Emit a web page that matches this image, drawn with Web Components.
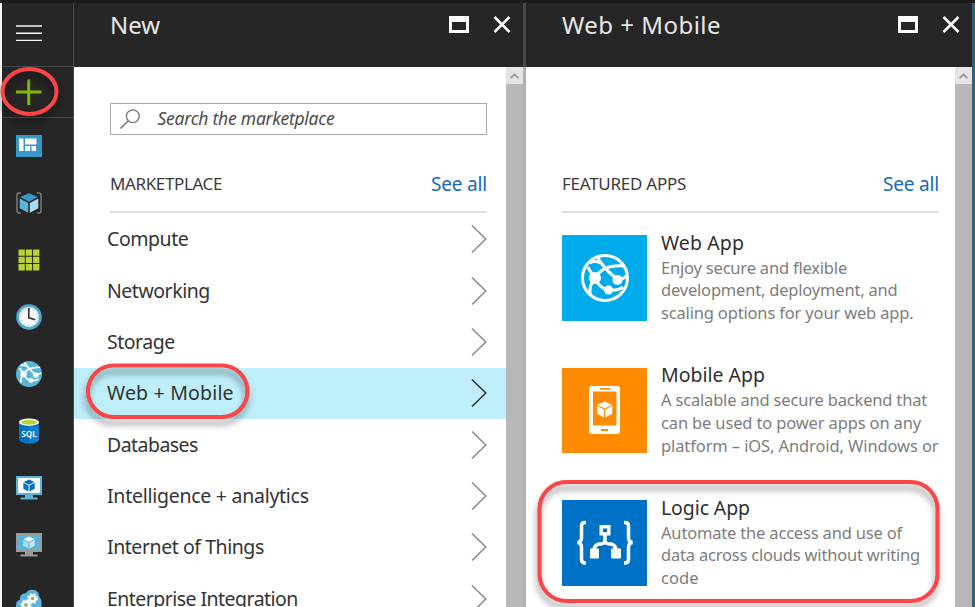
<!DOCTYPE html>
<html lang="en">
<head>
<meta charset="utf-8">
<title>New - Web + Mobile</title>
<style>
html,body{margin:0;width:975px;height:607px;overflow:hidden;background:#fff}
body{font-family:"Noto Sans","Open Sans",sans-serif;color:#333}
</style>
</head>
<body>
<portal-page></portal-page>
<script>
const define=(name,html,setup)=>customElements.define(name,class extends HTMLElement{
  connectedCallback(){
    if(this.shadowRoot)return;
    const t=document.createElement('template');
    t.innerHTML=html;
    this.attachShadow({mode:'open'}).append(t.content.cloneNode(true));
    if(setup)setup(this,this.shadowRoot);
  }
});

/* One line of text, tracked so that it takes the width given in "w". */
define('fit-text',`<style>
:host{display:block;white-space:nowrap;width:max-content}
span{display:inline-block}
</style><span></span>`,(el,root)=>{
  const s=root.querySelector('span');
  s.textContent=el.getAttribute('text');
  const w=parseFloat(el.getAttribute('w'));
  const natural=s.getBoundingClientRect().width;
  s.style.letterSpacing=((w-natural)/s.textContent.length)+'px';
});

const cube=(x,y,s,a,b,c)=>`<g transform="translate(${x} ${y}) scale(${s})"><path fill="${a}" d="M0-10 9-6 0-1.3-9-6Z"/><path fill="${b}" d="M-9.5-4.7-.8-.1V10l-8.7-4.6Z"/><path fill="${c}" d="M9.5-4.7.8-.1V10l8.7-4.6Z"/></g>`;
const globe=(disc,line,rim)=>`<circle cx="24" cy="24" r="22.5" fill="${disc}" stroke="${rim}" stroke-width="3"/>
<g fill="none" stroke="${line}" stroke-width="3.2"><path d="M16 2.500Q22 14 36 25M14 24Q22 10 44 12M9 9Q12 6 20 9M14 24Q8 16 7 13M14 24Q8 31 9 40M14 24Q18 34 27 36M27 36Q37 37 42 33M36 25Q41 26 46 22"/></g>
<g fill="${line}"><circle cx="14" cy="24" r="6"/><circle cx="36.500" cy="26" r="5"/><circle cx="27.500" cy="36" r="4.500"/></g>`;
const gear=(x,y,r)=>`<circle cx="${x}" cy="${y}" r="${r}" fill="#7fba42" stroke="#fff" stroke-width="2.600"/><circle cx="${x}" cy="${y}" r="${r+1.6}" fill="none" stroke="#e8f6fb" stroke-width="1.600" stroke-dasharray="2 1.700"/>`;

const ICONS={
menu:['0 0 26 26','<path d="M0 5h26M0 12.200h26M0 19.400h26" stroke="#f4f4f4" stroke-width="1.400"/>'],
plus:['0 0 26 26','<path d="M0 13h25.500M12.700.5v25.500" stroke="#7fb900" stroke-width="3" />'],
dash:['0 0 26 26','<path fill="#3999c6" d="M0 2h26v22H0z"/><path fill="#fff" d="M3 5.500h4.500v12.500H3zM9 5.500h11.500v6H9zM9 13h5v5H9zM15.500 13h4.500v5h-4.500z"/><path d="M14 14.500h2.500" stroke="#79bddd"/>'],
group:['0 0 26 26',`<path d="M5 3H3Q1 3 1 5v16q0 2 2 2h2M21 3h2q2 0 2 2v16q0 2-2 2h-2" fill="none" stroke="#7a7a7a" stroke-width="1.500"/>${cube(13,13,.98,'#3999c6','#59b4d9','#a9daee')}`],
grid:['0 0 26 26','<g fill="#b8d432"><path d="M2.500 2.500h6.300v6.300H2.500zM9.800 2.500h6.300v6.300H9.800zM17.100 2.500h6.300v6.300h-6.300zM2.500 9.800h6.300v6.300H2.500zM9.800 9.800h6.300v6.300H9.800zM17.100 9.800h6.300v6.300h-6.300zM2.500 17.100h6.300v6.300H2.500zM9.800 17.100h6.300v6.300H9.800zM17.100 17.100h6.300v6.300h-6.300z"/></g>'],
clock:['0 0 26 26','<circle cx="13" cy="13" r="11.400" fill="#fff" stroke="#4faad3" stroke-width="2.800"/><circle cx="13" cy="13" r="8.700" fill="none" stroke="#999" stroke-width="1.300" stroke-dasharray=".9 3.655"/><path d="M12.800 4v9.800l6.500 2" fill="none" stroke="#333" stroke-width="1.700"/>'],
web:['0 0 48 48',globe('#59b4d9','#fff','#59b4d9')],
sql:['0 0 26 26','<path fill="#0072c6" d="M3 4.500v17c0 2 4.500 4 10 4s10-2 10-4v-17z"/><path fill="#2d8fd3" d="M13 8.500h10v13c0 2-4.500 4-10 4z" opacity=".45"/><ellipse cx="13" cy="4.200" rx="10" ry="3.700" fill="#fff"/><ellipse cx="13" cy="4.200" rx="7.800" ry="2.500" fill="#b8d432"/><text x="13" y="18.700" text-anchor="middle" font-family="Noto Sans,sans-serif" font-size="8.300" font-weight="600" fill="#fff">SQL</text>'],
vm:['0 0 26 26',`<path fill="#59b4d9" d="M0 1h26v19h-9v2.500h4.500V24.500H4.500v-2h4.500V20H0z"/><path fill="#fff" d="M2 3h22v15H2z"/>${cube(13,10.500,.6,'#0072c6','#0072c6','#0072c6')}`],
vmc:['0 0 26 26',`<path fill="#999" d="M0 1h26v19h-9v2.500h4.500V24.500H4.500v-2h4.500V20H0z"/><path fill="#59b4d9" d="M2 3h22v15H2z"/>${cube(13,10.500,.6,'#fff','#a9daee','#c5e7f4')}`],
cloud:['0 0 26 26',`<path fill="#59b4d9" d="M6 24Q0 23 0 17T4 11Q3 5 10 4Q13 0 18 1T23 7Q27 12 25 19T18 24Z"/>${gear(16.500,9.500,3)}${gear(10,16,3.200)}`],
search:['0 0 20 20','<circle cx="12.800" cy="7.200" r="6.400" fill="none" stroke="#777" stroke-width="1.300"/><path d="M8.200 11.800.5 19.500" stroke="#777" stroke-width="1.600"/>'],
max:['0 0 20 17','<path fill="#fff" fill-rule="evenodd" d="M0 0h20v17H0zM3 6h14v8H3z"/>'],
close:['0 0 18 17','<path d="M1.500 1 16.500 16M16.500 1 1.500 16" stroke="#fff" stroke-width="2.500"/>'],
chevron:['0 0 16 30','<path d="M1 1.500 14.800 15 1 28.500" fill="none" stroke="currentColor" stroke-width="1.500"/>'],
webTile:['0 0 48 48',globe('none','#fff','#fff')],
mobileTile:['0 0 32 48',`<path fill="#fff" fill-rule="evenodd" d="M3 0h25q3 0 3 3v42q0 3-3 3H3q-3 0-3-3V3Q0 0 3 0M4 5.500v34h23.500v-34zM11 2v1.800h10V2zM12 43v2h7v-2z"/>${cube(15.700,23.500,.8,'#fff','#fff','#fff')}`],
logicTile:['0 0 56 44','<g fill="none" stroke="#fff" stroke-width="3.500"><path d="M9 1.500H8Q4.500 1.500 4.500 5v12q0 4-4 4.500q4 .5 4 4.500v12q0 4 3.500 4h1M47 1.500h1q3.500 0 3.500 3.500v12q0 4 4 4.500q-4 .5-4 4.500v12q0 4-3.500 4h-1"/><path d="M28 13v7Q28 23 22 23Q17 24 17 30M28 20Q28 23 34 23Q39 24 39 30"/></g><path fill="#fff" fill-rule="evenodd" d="M22.500 4h11v10.500h-11zM26 7.500v3.500h4V7.500z"/><path fill="#fff" d="M14 27.500h7q1 0 1 1v8q0 1-1 1h-7q-1 0-1-1v-8q0-1 1-1M35 27.500h8q1 0 1 1v8q0 1-1 1h-8q-1 0-1-1v-8q0-1 1-1"/>']
};
define('ui-icon',`<style>:host{display:block;flex:none}svg{display:block;width:100%;height:100%;overflow:visible}</style>`,(el,root)=>{
  const [vb,body]=ICONS[el.getAttribute('name')];
  root.innerHTML+=`<svg viewBox="${vb}">${body}</svg>`;
});

define('nav-rail',`<style>
:host{display:flex;flex-direction:column;width:71px;border-right:1px solid #4a4a4a;background:#262626;flex:none;height:604px;overflow:hidden}
div{height:57px;flex:none;display:flex;align-items:center;padding:0 0 1px 13.500px;box-sizing:border-box}
div.m{height:64px;border-bottom:1px solid #4a4a4a}
div.p{height:51px;border-bottom:1px solid #4a4a4a}
ui-icon{width:26px;height:26px}
</style>
<div class="m"><ui-icon name="menu"></ui-icon></div>
<div class="p"><ui-icon name="plus"></ui-icon></div>
<div><ui-icon name="dash"></ui-icon></div><div><ui-icon name="group"></ui-icon></div><div><ui-icon name="grid"></ui-icon></div><div><ui-icon name="clock"></ui-icon></div><div><ui-icon name="web"></ui-icon></div><div><ui-icon name="sql"></ui-icon></div><div><ui-icon name="vm"></ui-icon></div><div><ui-icon name="vmc"></ui-icon></div><div><ui-icon name="cloud"></ui-icon></div>`);

define('scroll-track',`<style>
:host{display:block;width:17px;background:#b8b8b8;flex:none}
div{height:17px;background:#e4e4e4;display:flex;align-items:center;justify-content:center}
svg{width:9px;height:6px}
</style><div><svg viewBox="0 0 9 6"><path d="M.5 5 4.500 1.500 8.500 5" fill="none" stroke="#999" stroke-width="1.800"/></svg></div>`);

define('portal-blade',`<style>
:host{display:flex;flex-direction:column;height:604px;flex:none;overflow:hidden;background:#fff}
header{height:64px;flex:none;background:#262626;color:#e6e6e6;display:flex;align-items:flex-start;padding:0 var(--hr) 0 36px;box-sizing:border-box}
header fit-text{font-size:24px;line-height:43px;font-weight:400;margin-right:auto}
.max{width:20px;height:17px;margin-top:13px}.x{width:18px;height:17px;margin:13px 0 0 24px}
section{display:flex;flex:1;min-height:0}
main{flex:1;min-width:0;overflow:hidden}
</style>
<header><fit-text></fit-text><ui-icon class="max" name="max"></ui-icon><ui-icon class="x" name="close"></ui-icon></header>
<section><main><slot></slot></main><scroll-track></scroll-track></section>`,(el,root)=>{
  const old=root.querySelector('fit-text'),t=document.createElement('fit-text');
  t.setAttribute('text',el.getAttribute('heading'));t.setAttribute('w',el.getAttribute('w'));
  old.replaceWith(t);
});

define('section-head',`<style>
:host{display:flex;justify-content:space-between;margin:0 19px 0 36px;height:41px;border-bottom:2px solid #dcdfe2;line-height:24px;box-sizing:border-box}
.t{font-size:17px;color:#3a3a3a}.a{font-size:19px;color:#1569bd}
</style><slot></slot>`,(el,root)=>{
  root.innerHTML=root.innerHTML.replace('<slot></slot>',`<fit-text class="t" text="${el.getAttribute('label')}" w="${el.getAttribute('w')}"></fit-text><fit-text class="a" text="See all" w="56"></fit-text>`);
});

define('search-box',`<style>
:host{display:flex;align-items:center;margin:36px 19px 0 36px;height:32px;border:1px solid #ababab;box-sizing:border-box;padding-left:9px}
ui-icon{width:20px;height:20px}
fit-text{font-size:17.500px;font-style:italic;color:#4c4c4c;margin-left:17.500px;line-height:28px;margin-top:-2px}
</style><ui-icon name="search"></ui-icon><fit-text text="Search the marketplace" w="177"></fit-text>`);

define('menu-row',`<style>
:host{display:flex;align-items:center;justify-content:space-between;height:51.330px;padding:0 19px 0 33px;color:#8a8a8a;box-sizing:border-box}
:host([selected]){background:#bdeefa;color:#333}
fit-text{font-size:19.500px;line-height:28px;color:#333}
ui-icon{width:16px;height:30px}
</style>`,(el,root)=>{
  root.innerHTML+=`<fit-text text="${el.getAttribute('label')}" w="${el.getAttribute('w')-1.2}"></fit-text><ui-icon name="chevron"></ui-icon>`;
});

define('app-card',`<style>
:host{display:flex;height:132.500px;padding-left:36px;box-sizing:border-box}
.tile{width:85px;height:85.500px;background:var(--c);display:flex;align-items:center;justify-content:center;flex:none}
.txt{margin-left:14px;margin-top:-6.500px}
.h{font-size:19.500px;line-height:28px;color:#2f2f2f}
.d{font-size:16.500px;line-height:22.800px;color:#7d7d7d}
ui-icon{width:var(--iw);height:var(--ih)}
</style>`,(el,root)=>{
  const lines=el.getAttribute('lines').split('|').map(l=>l.split('='));
  root.innerHTML+=`<div class="tile"><ui-icon name="${el.getAttribute('icon')}"></ui-icon></div><div class="txt">${lines.map(([t,w],i)=>`<fit-text class="${i?'d':'h'}" text="${t}" w="${w-1}"></fit-text>`).join('')}</div>`;
});

define('callout-marks',`<style>
:host{position:absolute;inset:0;pointer-events:none}
svg{display:block;width:975px;height:607px}
g{filter:drop-shadow(-1px 6px 3px rgba(0,0,0,.38))}
</style><svg viewBox="0 0 975 607"><g fill="none" stroke="#fb4546" stroke-width="4"><ellipse cx="29.500" cy="91.500" rx="27" ry="22.500"/><rect x="88" y="365.500" width="159.500" height="51.500" rx="25.700"/><rect x="539.500" y="482" width="398" height="119" rx="27"/></g></svg>`);

define('portal-page',`<style>
:host{display:block;position:relative;width:975px;height:607px;overflow:hidden;background:#1c1c1c}
.row{display:flex;padding-top:3px;height:604px}
.edge{width:2px;background:#f5f5f5;flex:none}
.sep{width:3px;flex:none;background:linear-gradient(#484848 64px,#b2b2b2 64px)}
.right{width:3px;background:#2f607e;flex:none}
.new{width:449px;--hr:12px}.mob{width:446px;--hr:12px}
.list{padding-top:.6px}
</style>
<div class="row"><div class="edge"></div><nav-rail></nav-rail>
<portal-blade class="new" heading="New" w="50">
<search-box></search-box>
<section-head style="margin-top:37px" label="MARKETPLACE" w="112"></section-head>
<div class="list">
<menu-row label="Compute" w="82.500"></menu-row>
<menu-row label="Networking" w="104"></menu-row>
<menu-row label="Storage" w="69"></menu-row>
<menu-row selected label="Web + Mobile" w="128"></menu-row>
<menu-row label="Databases" w="92"></menu-row>
<menu-row label="Intelligence + analytics" w="203"></menu-row>
<menu-row label="Internet of Things" w="158"></menu-row>
<menu-row label="Enterprise Integration" w="192"></menu-row>
</div></portal-blade>
<div class="sep"></div>
<portal-blade class="mob" heading="Web + Mobile" w="159">
<section-head style="margin:105px 16px 22px 36px" label="FEATURED APPS" w="124"></section-head>
<app-card style="--c:#00abec;--iw:48px;--ih:48px" icon="webTile" lines="Web App=84|Enjoy secure and flexible=187|development, deployment, and=237.500|scaling options for your web app.=253.500"></app-card>
<app-card style="--c:#ff8c00;--iw:32px;--ih:48px" icon="mobileTile" lines="Mobile App=105|A scalable and secure backend that=267|can be used to power apps on any=261|platform – iOS, Android, Windows or=278.500"></app-card>
<app-card style="--c:#0072c6;--iw:56px;--ih:44px" icon="logicTile" lines="Logic App=90|Automate the access and use of=242|data across clouds without writing=260|code=38.500"></app-card>
</portal-blade>
<div class="right"></div></div>
<callout-marks></callout-marks>`);
</script>
</body>
</html>
